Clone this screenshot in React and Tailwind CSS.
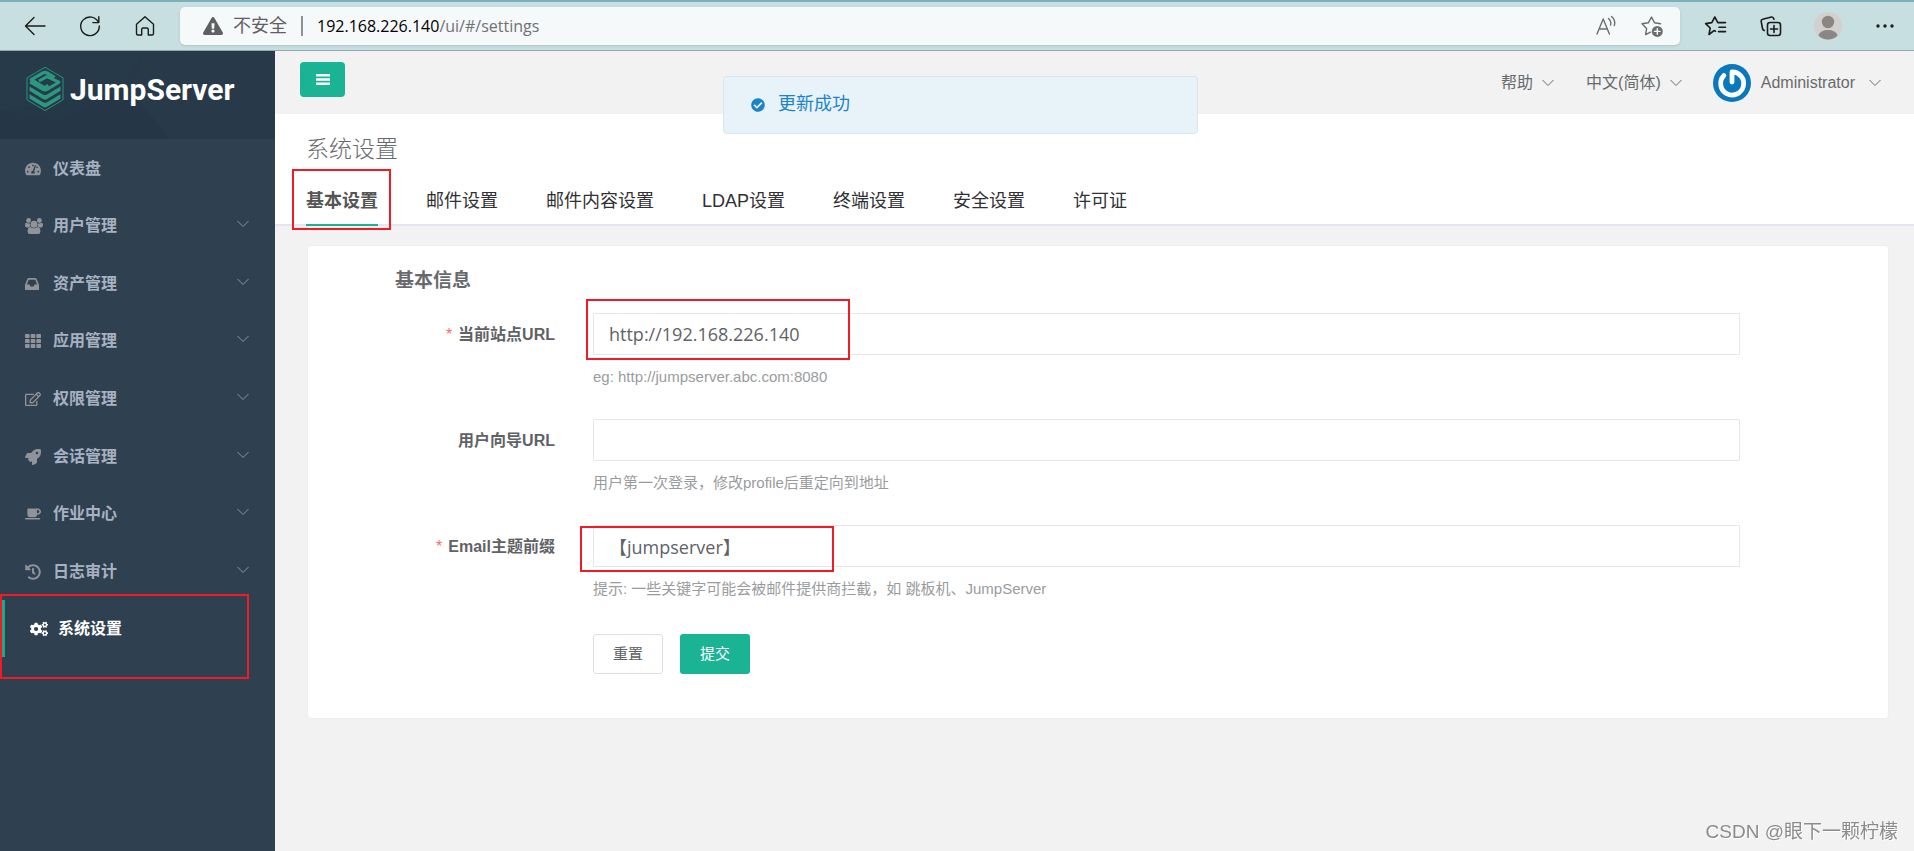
import React from 'react';
import { FaTachometerAlt, FaTh, FaRegEdit, FaRocket, FaCoffee, FaHistory, FaCogs, FaCheckCircle, FaExclamationTriangle } from 'react-icons/fa';

function UsersIcon({ className }) {
  return (
    <svg className={className} width="18" height="16" viewBox="0 0 18 16" fill="currentColor" aria-hidden="true">
      <circle cx="9" cy="6.2" r="3.5" />
      <path d="M2.6 13.4 Q2.6 9.2 5.4 9 Q9 11.6 12.6 9 Q15.4 9.2 15.4 13.4 Q15.4 16 13.2 16 H4.8 Q2.6 16 2.6 13.4" />
      <circle cx="3.6" cy="2.5" r="2.4" />
      <circle cx="14.4" cy="2.5" r="2.4" />
      <path d="M0 7 Q0 4.7 1.4 4.7 Q3.4 6 4.9 5.2 Q4.6 7.2 5.6 8.4 Q4.4 8.4 3.6 9.4 H1.6 Q0 9.2 0 7" />
      <path d="M18 7 Q18 4.7 16.6 4.7 Q14.6 6 13.1 5.2 Q13.4 7.2 12.4 8.4 Q13.6 8.4 14.4 9.4 H16.4 Q18 9.2 18 7" />
    </svg>
  );
}

function InboxIcon({ className }) {
  return (
    <svg className={className} width="14" height="12" viewBox="0 0 14 12" fill="currentColor" fillRule="evenodd" aria-hidden="true">
      <path d="M2.6 0.6 Q2.8 0 3.5 0 H10.5 Q11.2 0 11.4 0.6 L13.7 6 Q14 6.8 14 7.5 V11.4 Q14 12 13.4 12 H0.6 Q0 12 0 11.4 V7.5 Q0 6.8 0.3 6 Z M3.7 1.8 L1.9 6.6 H4.5 L5.4 8.5 H8.6 L9.5 6.6 H12.1 L10.3 1.8 Z" />
    </svg>
  );
}

const menu = [
  { label: '仪表盘', Icon: FaTachometerAlt },
  { label: '用户管理', Icon: UsersIcon, sub: true },
  { label: '资产管理', Icon: InboxIcon, sub: true },
  { label: '应用管理', Icon: FaTh, sub: true },
  { label: '权限管理', Icon: FaRegEdit, sub: true },
  { label: '会话管理', Icon: FaRocket, sub: true },
  { label: '作业中心', Icon: FaCoffee, sub: true },
  { label: '日志审计', Icon: FaHistory, sub: true },
  { label: '系统设置', Icon: FaCogs, active: true },
];

const tabs = ['基本设置', '邮件设置', '邮件内容设置', 'LDAP设置', '终端设置', '安全设置', '许可证'];

function Chevron({ className }) {
  return (
    <svg className={className} width="12" height="8" viewBox="0 0 12 8" fill="none" stroke="currentColor" aria-hidden="true">
      <path d="M0.5 1 L6 6.5 L11.5 1" />
    </svg>
  );
}

function Highlight({ className }) {
  return <span aria-hidden="true" className={`pointer-events-none absolute border-2 border-[#ee1c25] ${className}`} />;
}

function BrowserBar() {
  const ui = { width: 24, height: 24, viewBox: '0 0 24 24', fill: 'none', stroke: 'currentColor', strokeWidth: 1.4, strokeLinecap: 'round', strokeLinejoin: 'round' };
  return (
    <div className="flex h-[51px] items-center border-t-2 border-b border-t-[#7ab0bb] border-b-[#8fa9ad] bg-[#c8dfe2] pr-[17px] pl-[23px] text-[#1b1b1b]">
      <div className="flex shrink-0 gap-[31px]">
        <button type="button" aria-label="后退">
          <svg {...ui}><path d="M22 12 H2.5 M11 3.5 L2.5 12 L11 20.5" /></svg>
        </button>
        <button type="button" aria-label="刷新">
          <svg {...ui}><path d="M20.5 8.5 A9.3 9.3 0 1 0 21.3 12 M20.8 2.6 V8.6 H14.8" /></svg>
        </button>
        <button type="button" aria-label="主页">
          <svg {...ui}><path d="M3.5 10.3 L12 2.8 L20.5 10.3 V19.5 Q20.5 21 19 21 H15.3 V15.5 Q15.3 14 13.8 14 H10.2 Q8.7 14 8.7 15.5 V21 H5 Q3.5 21 3.5 19.5 Z" /></svg>
        </button>
      </div>
      <div className="ml-[23px] flex h-[38px] min-w-0 flex-1 items-center rounded-[5px] bg-[#f5f9fa] pr-4 pl-[23px] shadow-sm">
        <FaExclamationTriangle size={20} className="shrink-0 text-[#5f6061]" />
        <span className="ml-2.5 shrink-0 text-lg text-[#5f6061]">不安全</span>
        <span className="mx-3.5 h-5 w-0.5 shrink-0 bg-[#8f9192]" />
        <span className="flex-1 truncate font-['Open_Sans','Noto_Sans_CJK_SC',sans-serif] text-base text-[#707273]">
          <span className="text-black">192.168.226.140</span>/ui/#/settings
        </span>
        <div className="flex shrink-0 gap-[22px] text-[#6b6d6e]">
          <button type="button" aria-label="朗读此页内容">
            <svg {...ui}><path d="M3 20 L9.2 5 L15.4 20 M5.2 15 H13.2 M14.5 4.5 Q17.5 7 16.6 11 M17.5 2.5 Q22 6 20.3 11.5" /></svg>
          </button>
          <button type="button" aria-label="添加到收藏夹">
            <svg {...ui}>
              <path d="M10.5 18.2 L5.6 20.6 L6.6 14.5 L2 9.8 L8.3 8.8 L11.5 3 L14.6 8.8 L20.5 9.8" />
              <circle cx="17.3" cy="17.4" r="5.5" fill="currentColor" stroke="none" />
              <path d="M17.3 14.6 V20.2 M14.5 17.4 H20.1" stroke="#f5f9fa" />
            </svg>
          </button>
        </div>
      </div>
      <div className="ml-6 flex shrink-0 items-center gap-[31px]">
        <button type="button" aria-label="收藏夹">
          <svg {...ui} strokeWidth="1.6"><path d="M11.5 17.2 L10 16.6 L5 20.5 L6.2 14 L1.6 9.6 L7.8 8.6 L10.8 3 L13.8 8.6 H21.5 M15 13.2 H21.5 M14.5 17.6 H21.5" /></svg>
        </button>
        <button type="button" aria-label="集锦">
          <svg {...ui} strokeWidth="1.6">
            <rect x="8.5" y="8.5" width="13" height="13" rx="2.5" />
            <path d="M15 11.5 V18.5 M11.5 15 H18.5 M5.3 16.5 Q3.8 16 3.5 14.5 L2.2 7.5 Q2 5.6 3.8 5.2 L12.5 3 Q14.3 2.8 15 5.2" />
          </svg>
        </button>
        <button type="button" aria-label="个人资料">
          <svg width="28" height="28" viewBox="0 0 28 28">
            <circle cx="14" cy="14" r="14" fill="#d2d0ce" />
            <circle cx="14" cy="10" r="6.2" fill="#8a8683" />
            <path d="M4.3 23.5 Q6.5 18 14 18 Q21.5 18 23.7 23.5 A14 14 0 0 1 4.3 23.5" fill="#8a8683" />
          </svg>
        </button>
        <button type="button" aria-label="设置及其他">
          <svg width="24" height="24" viewBox="0 0 24 24" fill="currentColor"><circle cx="5" cy="12" r="1.7" /><circle cx="12" cy="12" r="1.7" /><circle cx="19" cy="12" r="1.7" /></svg>
        </button>
      </div>
    </div>
  );
}

function Logo() {
  return (
    <a href="#/" className="relative flex h-[88px] items-start overflow-hidden bg-[#263949] pt-[15px] pl-[26px]">
      <svg className="absolute inset-0 h-full w-full" viewBox="0 0 275 88" preserveAspectRatio="none" aria-hidden="true">
        <path d="M0 0 H145 L120 40 L60 70 L0 60 Z" fill="#283b4b" opacity=".5" />
        <path d="M145 0 H275 V88 H170 L130 40 Z" fill="#293c4b" opacity=".5" />
        <path d="M130 40 L170 88 H0 V60 Z" fill="#243646" opacity=".5" />
      </svg>
      <svg className="relative shrink-0" width="38" height="46" viewBox="0 0 38 46" aria-hidden="true">
        <path d="M19 1.2 L37 11.8 V33.8 L19 44.6 L1 33.8 V11.8 Z" fill="none" stroke="#2a8f7d" strokeWidth="1" />
        <path d="M31 10.8 L21.5 5.2 Q19 4 16.5 5.2 L3.6 12.6 L19.6 22.4 L23.4 20.1 L13.8 14 L21.5 9.6 L34.5 17.4 L20.8 25.6 Q19 26.4 17.2 25.6 L3.4 17.2 V13.6" fill="none" />
        <g fill="none" stroke="#2b9880" strokeLinejoin="round">
          <path d="M28.6 11.4 L21.2 7 Q19 5.9 16.8 7 L5.2 13.6 L18.4 21.6 L22.4 19.4" strokeWidth="3.2" />
          <path d="M13 15 L21 10.6 L33 16.2 L21 23.4 Q19 24.4 17 23.4 L4 16" strokeWidth="3" />
        </g>
        <g fill="#2b9880">
          <path d="M3.5 20.4 L17 28.4 Q19 29.4 21 28.4 L34.5 20.4 V24.8 L21 33 Q19 34 17 33 L3.5 24.8 Z" />
          <path d="M3.5 28.2 L17 36.2 Q19 37.2 21 36.2 L34.5 28.2 V32.6 L21 40.8 Q19 41.8 17 40.8 L3.5 32.6 Z" />
        </g>
      </svg>
      <span className="relative ml-1.5 font-[Roboto,sans-serif] text-[30px] leading-[48px] font-bold text-white">JumpServer</span>
    </a>
  );
}

function Sidebar() {
  return (
    <aside className="w-[275px] shrink-0 bg-[#2f4050]">
      <Logo />
      <nav className="relative">
        <ul className="flex h-[518px] flex-col">
          {menu.map(({ label, Icon, sub, active }) => (
            <li key={label} className="flex-1">
              <a
                href="#/settings"
                className={`flex h-full items-center pt-0.5 pr-[26px] text-base font-bold ${active ? 'border-l-[5px] border-[#19aa8d] pl-[25px] text-white' : 'pl-[25px] text-[#a7b1c2]'}`}
              >
                <span className="w-7 shrink-0"><Icon size={active ? 18 : 16} className={active ? 'text-white' : 'text-[#909399]'} /></span>
                <span className="flex-1">{label}</span>
                {sub && <Chevron className="mb-1 text-[#909399]" />}
              </a>
            </li>
          ))}
        </ul>
        <Highlight className="top-[455px] left-0 h-[85px] w-[249px]" />
      </nav>
    </aside>
  );
}

function TopBar() {
  return (
    <header className="flex h-[63px] items-center justify-between bg-[#f2f2f2] pr-[33px] pl-[25px] text-[#676a6c]">
      <button type="button" aria-label="折叠菜单" className="mb-[7px] flex h-[35px] w-[45px] items-center justify-center rounded bg-[#1ab394] text-white">
        <svg width="14" height="11" viewBox="0 0 14 11" fill="currentColor"><path d="M0 0h14v2.5H0z M0 4.2h14v2.5H0z M0 8.5h14v2.5H0z" /></svg>
      </button>
      <div className="flex items-center text-base">
        <button type="button" className="flex items-center gap-[9px]">帮助<Chevron /></button>
        <button type="button" className="ml-8 flex items-center gap-[9px]">中文(简体)<Chevron /></button>
        <button type="button" className="ml-[31px] flex items-center">
          <svg width="38" height="38" viewBox="0 0 38 38" aria-hidden="true">
            <circle cx="19" cy="19" r="19" fill="#0a78bd" />
            <path d="M19 18 V8 A11.5 11.5 0 1 1 10.8 11.6" fill="none" stroke="#fff" strokeWidth="4.8" strokeLinecap="round" strokeLinejoin="round" />
          </svg>
          <span className="mr-[14px] ml-[10px]">Administrator</span>
          <Chevron />
        </button>
      </div>
    </header>
  );
}

function Field({ id, label, required, help, value, children }) {
  return (
    <div className="mb-8 flex">
      <label htmlFor={id} className="w-[247px] shrink-0 pt-2.5 text-right text-base leading-6 font-bold text-[#606266]">
        {required && <span className="mr-1.5 font-normal text-[#f56c6c]">*</span>}
        {label}
      </label>
      <div className="relative ml-[38px] min-w-0 flex-1">
        <input
          id={id}
          type="text"
          defaultValue={value}
          className="block h-[42px] w-full rounded-[1px] border border-[#e5e6e7] bg-white px-[15px] font-['Open_Sans','Noto_Sans_CJK_SC',sans-serif] text-lg text-[#606266] outline-none"
        />
        <p className="mt-3 text-[15px] leading-5 text-[#999c9e]">{help}</p>
        {children}
      </div>
    </div>
  );
}

export default function App() {
  return (
    <div className="flex min-h-screen flex-col bg-[#f2f2f2] font-['Liberation_Sans','Noto_Sans_CJK_SC',sans-serif]" lang="zh-CN">
      <BrowserBar />
      <div className="flex flex-1">
        <Sidebar />
        <main className="relative min-w-0 flex-1">
          <TopBar />
          <section className="border-b-2 border-[#e4e7ed] bg-white pl-[31px]">
            <h1 className="pt-[19px] text-[23px] leading-8 font-light text-[#676a6c]">系统设置</h1>
            <nav className="mt-[5px] flex gap-12 text-lg text-[#303133]">
              {tabs.map((t, i) => (
                <a
                  key={t}
                  href="#/settings"
                  className={`relative -mb-0.5 flex h-[56px] items-center border-b-2 pt-2 ${i === 0 ? 'border-[#1ab394] font-bold text-[#555]' : 'border-transparent'}`}
                >
                  {t}
                  {i === 0 && <Highlight className="-top-px -right-[13px] -bottom-[6px] -left-[14px]" />}
                </a>
              ))}
            </nav>
          </section>

          <form className="mt-[19px] mr-[25px] mb-8 ml-8 rounded border border-[#ebeef5] bg-white pt-[21px] pr-[148px] pb-11" onSubmit={(e) => e.preventDefault()}>
            <h2 className="mb-[18px] pl-[87px] text-[19px] leading-7 font-bold text-[#676a6c]">基本信息</h2>
            <Field id="site-url" label="当前站点URL" required value="http://192.168.226.140" help="eg: http://jumpserver.abc.com:8080">
              <Highlight className="-top-3.5 -left-[7px] h-[61px] w-[264px]" />
            </Field>
            <Field id="guide-url" label="用户向导URL" value="" help="用户第一次登录，修改profile后重定向到地址" />
            <Field id="mail-prefix" label="Email主题前缀" required value="【jumpserver】" help="提示: 一些关键字可能会被邮件提供商拦截，如 跳板机、JumpServer">
              <Highlight className="top-px -left-[13px] h-[46px] w-[254px]" />
            </Field>
            <div className="flex gap-[17px] pt-[3px] pl-[285px] text-[15px]">
              <button type="reset" className="h-10 w-[70px] rounded-[3px] border border-[#dcdfe6] bg-white text-[#606266]">重置</button>
              <button type="submit" className="h-10 w-[70px] rounded-[3px] bg-[#1ab394] text-white">提交</button>
            </div>
          </form>

          <div role="status" className="absolute top-[25px] left-[448px] flex h-[58px] w-[475px] items-center rounded border border-[#d3e7f3] bg-[#e8f3f9] pb-[3px] pl-[27px] text-lg text-[#1c84c6]">
            <FaCheckCircle size={14} className="mt-0.5 mr-[13px]" />
            更新成功
          </div>
        </main>
      </div>
      <span className="fixed right-4 bottom-1 text-[19px] leading-[30px] text-[#8b8b8b] [text-shadow:1px_1px_0_#fff]">CSDN @眼下一颗柠檬</span>
    </div>
  );
}
